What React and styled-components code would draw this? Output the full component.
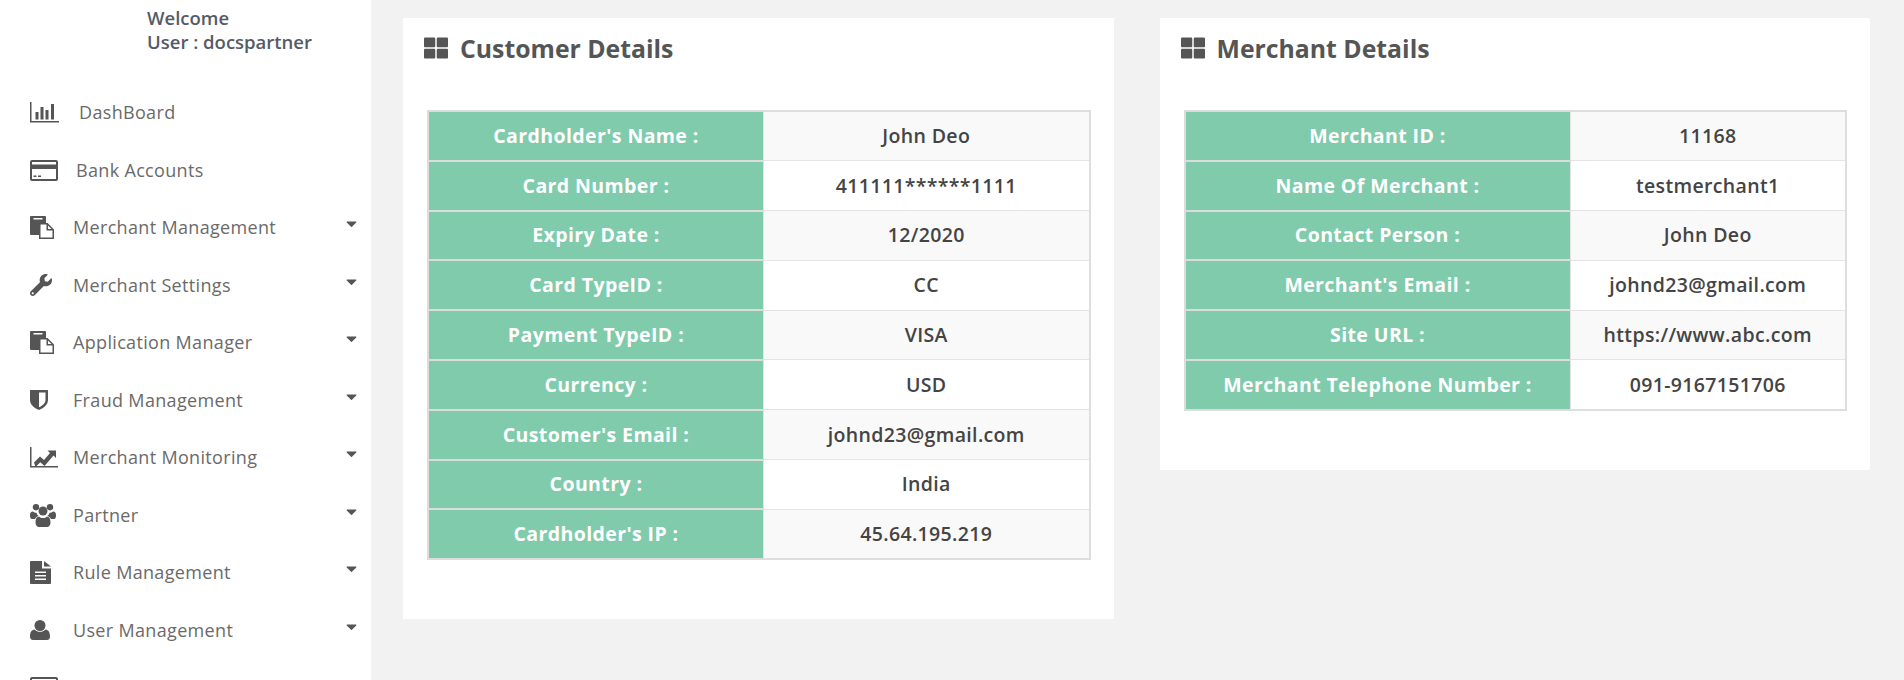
import styled, { createGlobalStyle } from "styled-components"
import { FaCaretDown, FaThLarge, FaWrench } from "react-icons/fa"

const Global = createGlobalStyle`
    html, body {
        margin: 0;
        height: 100%;
        overflow: hidden;
        background: #f2f2f2;
        font-family: "Open Sans", "Liberation Sans", sans-serif;
    }
`

const Page = styled.div`
    display: flex;
    height: 680px;
    overflow: hidden;
`

const Sidebar = styled.aside`
    width: 371px;
    flex: none;
    background: #fff;
`

const Welcome = styled.div`
    padding: 6px 0 0 147px;
    height: 78px;
    font-size: 18.5px;
    font-weight: 600;
    line-height: 24px;
    color: #555b66;
`

const NavRow = styled.div`
    display: flex;
    align-items: center;
    height: 57.5px;
    padding: 0 11px 0 30px;
    color: #6a6a6a;
    font-size: 18px;
    letter-spacing: 0.33px;
`

const NavIcon = styled.span`
    display: flex;
    align-items: center;
    width: ${(p) => p.$width}px;
    flex: none;
    color: #555;
    font-size: 22px;
`

const NavLabel = styled.span`
    flex: 1;
    margin-top: -1px;
`

const Caret = styled.span`
    display: flex;
    color: #555;
    font-size: 17px;
    margin-top: -8px;
`

const Main = styled.main`
    flex: 1;
    display: flex;
    align-items: flex-start;
    gap: 46px;
    padding: 18px 34px 0 32px;
`

const Card = styled.section`
    flex: 1;
    background: #fff;
    padding: 5px 23px 59px 24px;
`

const CardTitle = styled.h2`
    display: flex;
    align-items: center;
    gap: 12px;
    height: 50px;
    margin: 0 0 37px -3px;
    font-size: 24.8px;
    font-weight: 700;
    color: #555;

    svg {
        font-size: 24px;
    }
`

const Table = styled.table`
    width: 100%;
    table-layout: fixed;
    border-collapse: collapse;
    border: 2px solid #dedede;
`

const Row = styled.tr`
    height: 49.8px;
    background: ${(p) => (p.$odd ? "#f9f9f9" : "#fff")};
`

const Label = styled.td`
    width: ${(p) => p.$width}px;
    padding: 0 0 1px;
    background: #7fcbac;
    border: 2px solid #dcdcdc;
    border-right: none;
    color: #fff;
    font-size: 19.5px;
    font-weight: 700;
    letter-spacing: 0.4px;
    text-align: center;
`

const Value = styled.td`
    padding: 0 0 1px;
    border: 1.5px solid #e4e4e4;
    color: #444;
    font-size: 19.5px;
    font-weight: 600;
    letter-spacing: 0.35px;
    text-align: center;
`

const BarChartIcon = () => (
    <svg width="29" height="21" viewBox="0 0 29 21" fill="#555">
        <path d="M0 0h1.500v19H29v1.500H0z" />
        <path d="M5.500 10h3v7.500h-3zM10.500 5h3v12.500h-3zM15.500 8h3v9.500h-3zM21 2h3v15.500h-3z" />
    </svg>
)

const CardIcon = () => (
    <svg width="28" height="21" viewBox="0 0 28 21" fill="#555">
        <path fillRule="evenodd" d="M2 0h24a2 2 0 0 1 2 2v17a2 2 0 0 1-2 2H2a2 2 0 0 1-2-2V2a2 2 0 0 1 2-2zM2 2v2.500h24V2zM2 9v10h24V9z" />
        <path d="M3.500 15.500h3v1.500h-3zM8 15.500h3v1.500H8z" />
    </svg>
)

const PasteIcon = () => (
    <svg width="24" height="23" viewBox="0 0 24 23">
        <path fill="#555" d="M1 0h14a1 1 0 0 1 1 1v18H1a1 1 0 0 1-1-1V1a1 1 0 0 1 1-1z" />
        <path fill="#fff" stroke="#555" strokeWidth="1.500" d="M9.750 7.750h7.500l6 6v8.500h-13.500z" />
        <path fill="#555" d="M16.500 8h1.500v5h5v1.500h-6.500z" />
        <path fill="#fff" d="M3.500 2h9v1.500h-9z" />
    </svg>
)

const ShieldIcon = () => (
    <svg width="18" height="20" viewBox="0 0 18 20" fill="#555">
        <path fillRule="evenodd" d="M0.500 0h17a.5.5 0 0 1 .5.5V10c0 5-5 8.500-9 10-4-1.500-9-5-9-10V.5a.5.5 0 0 1 .5-.5zM9 2.500v14.800c3-1.400 6.500-4 6.500-7.300V2.500z" />
    </svg>
)

const LineChartIcon = () => (
    <svg width="28" height="21" viewBox="0 0 28 21" fill="#555">
        <path d="M0 0h1.500v19H28v1.500H0z" />
        <path d="M4 15.500l6-6 4 3.500 6-7-2.500-2.500H26v7.500l-2.500-2.500-9 10.500-4.200-3.700-4.800 4.700z" />
    </svg>
)

const UsersIcon = () => (
    <svg width="26" height="23" viewBox="0 0 26 23" fill="#555">
        <circle cx="6" cy="3.200" r="3.200" />
        <circle cx="20" cy="3.200" r="3.200" />
        <circle cx="13" cy="7" r="4.500" />
        <path d="M0 11c0-2 1-3.500 3-3.500 1 1 2 1.200 3.500 1.200 .3 1.200 1 2.300 2 3-1.700.7-3 2-3.400 3.300H2c-1.500 0-2-1.500-2-4zM26 11c0-2-1-3.500-3-3.500-1 1-2 1.200-3.500 1.200-.3 1.200-1 2.300-2 3 1.700.7 3 2 3.400 3.300H24c1.500 0 2-1.500 2-4z" />
        <path d="M9 12.500c1 1 2.500 1.500 4 1.500s3-.5 4-1.500c2.500.3 3.500 2.500 3.500 6 0 2.500-1.500 4.500-3.500 4.500H9c-2 0-3.500-2-3.500-4.500 0-3.500 1-5.700 3.500-6z" />
    </svg>
)

const FileIcon = () => (
    <svg width="21" height="23" viewBox="0 0 21 23" fill="#555">
        <path fillRule="evenodd" d="M1 0h11v7.500h9V22a1 1 0 0 1-1 1H1a1 1 0 0 1-1-1V1a1 1 0 0 1 1-1zM5 10.500v1.500h11v-1.500zM5 14v1.500h11V14zM5 17.500V19h11v-1.500z" />
        <path d="M14 0l7 5.500h-7z" />
    </svg>
)

const UserIcon = () => (
    <svg width="20" height="20" viewBox="0 0 20 20" fill="#555">
        <circle cx="10" cy="5.500" r="5.500" />
        <path d="M4.500 9.500c1.500 1.500 3.500 2.300 5.500 2.300s4-.8 5.500-2.300c3 .3 4.500 3 4.500 7 0 2-1 3.500-3 3.500H3c-2 0-3-1.500-3-3.500 0-4 1.500-6.700 4.500-7z" />
    </svg>
)

const navItems = [
    { label: "DashBoard", icon: <BarChartIcon />, width: 49 },
    { label: "Bank Accounts", icon: <CardIcon />, width: 46 },
    { label: "Merchant Management", icon: <PasteIcon />, width: 43, caret: true },
    { label: "Merchant Settings", icon: <FaWrench />, width: 43, caret: true },
    { label: "Application Manager", icon: <PasteIcon />, width: 43, caret: true },
    { label: "Fraud Management", icon: <ShieldIcon />, width: 43, caret: true },
    { label: "Merchant Monitoring", icon: <LineChartIcon />, width: 43, caret: true },
    { label: "Partner", icon: <UsersIcon />, width: 43, caret: true },
    { label: "Rule Management", icon: <FileIcon />, width: 43, caret: true },
    { label: "User Management", icon: <UserIcon />, width: 43, caret: true },
    { label: "", icon: <CardIcon />, width: 43 },
]

const customer = [
    ["Cardholder's Name :", "John Deo"],
    ["Card Number :", "411111******1111"],
    ["Expiry Date :", "12/2020"],
    ["Card TypeID :", "CC"],
    ["Payment TypeID :", "VISA"],
    ["Currency :", "USD"],
    ["Customer's Email :", "johnd23@gmail.com"],
    ["Country :", "India"],
    ["Cardholder's IP :", "45.64.195.219"],
]

const merchant = [
    ["Merchant ID :", "11168"],
    ["Name Of Merchant :", "testmerchant1"],
    ["Contact Person :", "John Deo"],
    ["Merchant's Email :", "johnd23@gmail.com"],
    ["Site URL :", "https://www.abc.com"],
    ["Merchant Telephone Number :", "091-9167151706"],
]

const DetailsCard = ({ title, rows, labelWidth }) => (
    <Card>
        <CardTitle><FaThLarge />{title}</CardTitle>
        <Table>
            <tbody>
                {rows.map(([label, value], i) => (
                    <Row key={label} $odd={i % 2 === 0}>
                        <Label $width={labelWidth}>{label}</Label>
                        <Value>{value}</Value>
                    </Row>
                ))}
            </tbody>
        </Table>
    </Card>
)

const App = () => {
    return (
        <Page>
            <Global />
            <Sidebar>
                <Welcome>
                    <div>Welcome</div>
                    <div>User : docspartner</div>
                </Welcome>
                {navItems.map((item) => (
                    <NavRow key={item.label || "more"}>
                        <NavIcon $width={item.width}>{item.icon}</NavIcon>
                        <NavLabel>{item.label}</NavLabel>
                        {item.caret && <Caret><FaCaretDown /></Caret>}
                    </NavRow>
                ))}
            </Sidebar>
            <Main>
                <DetailsCard title="Customer Details" rows={customer} labelWidth={334} />
                <DetailsCard title="Merchant Details" rows={merchant} labelWidth={384} />
            </Main>
        </Page>
    )
}

export default App
